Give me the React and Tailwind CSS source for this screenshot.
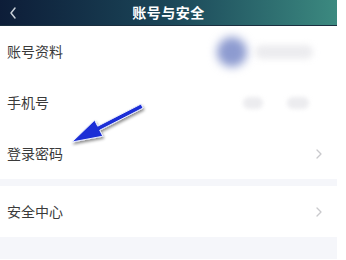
import React from 'react';

const font = { fontFamily: '"Noto Sans CJK SC", "Noto Sans", sans-serif' };

const Chevron = () => (
  <svg width="8" height="12" viewBox="0 0 8 12" fill="none">
    <path d="M2 2 L6 6 L2 10" stroke="#c9c9cc" strokeWidth="1.3" strokeLinecap="round" strokeLinejoin="round" />
  </svg>
);

const Row = ({ label, children }) => (
  <div className="flex items-center justify-between h-[51px] pl-[7px] pr-[14px] bg-white">
    <span className="text-[14px] text-[#3a3a3a]">{label}</span>
    {children}
  </div>
);

export default function App() {
  return (
    <div className="relative w-[346px] h-[260px] overflow-hidden bg-white" style={font}>
      <div className="w-[337px]">
        {/* header */}
        <div className="relative flex items-center justify-center h-[26px] bg-gradient-to-r from-[#0d1d38] via-[#1b4658] to-[#3c8a80] border-b border-[#1a2f3f]">
          <svg className="absolute left-[8px] top-[6px]" width="10" height="14" viewBox="0 0 10 14" fill="none">
            <path d="M7 2 L3 7 L7 12" stroke="#c8d0d8" strokeWidth="1.5" strokeLinecap="round" strokeLinejoin="round" />
          </svg>
          <span className="text-[14px] font-bold text-white tracking-[0.5px]">账号与安全</span>
        </div>

        <Row label="账号资料">
          <div className="flex items-center gap-[8px] mr-[10px]">
            <div className="w-[30px] h-[30px] rounded-full bg-[#8d9bd0] blur-[5px]" />
            <div className="w-[58px] h-[14px] rounded-full bg-[#ececef] blur-[3px]" />
          </div>
        </Row>
        <Row label="手机号">
          <div className="flex items-center gap-[24px] mr-[14px]">
            <div className="w-[20px] h-[12px] rounded-full bg-[#ececef] blur-[2px]" />
            <div className="w-[22px] h-[12px] rounded-full bg-[#ececef] blur-[2px]" />
          </div>
        </Row>
        <Row label="登录密码">
          <Chevron />
        </Row>
        <div className="h-[7px] bg-[#f5f6fa]" />
        <Row label="安全中心">
          <Chevron />
        </Row>
        <div className="h-[22px] bg-[#f5f6fa]" />
      </div>

      {/* annotation arrow */}
      <svg className="absolute left-0 top-0" width="346" height="260" viewBox="0 0 346 260">
        <defs>
          <filter id="sh" x="-20%" y="-20%" width="140%" height="140%">
            <feDropShadow dx="1" dy="2" stdDeviation="1.5" floodColor="#000" floodOpacity="0.45" />
          </filter>
        </defs>
        <g filter="url(#sh)">
          <path
            d="M141 104 L97.7 126.2 L94.6 120.2 L72 142 L102.8 136.2 L99.7 130.2 L143 108 Z"
            fill="#1c2fd6"
            stroke="#e8ecff"
            strokeWidth="1"
            strokeLinejoin="round"
          />
        </g>
      </svg>
    </div>
  );
}
